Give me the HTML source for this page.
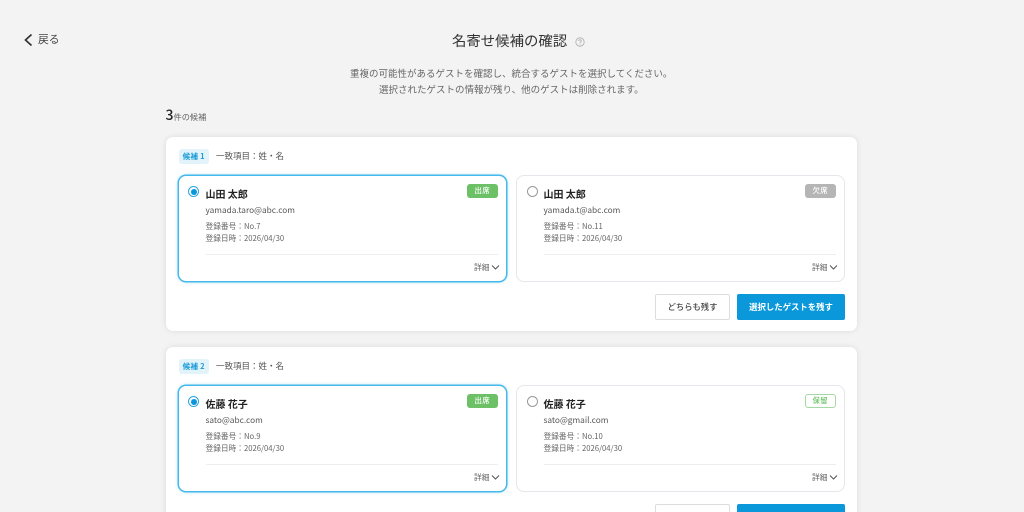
<!DOCTYPE html>
<html lang="ja"><head><meta charset="utf-8"><title>名寄せ候補の確認</title>
<style>
*{box-sizing:border-box;margin:0;padding:0}
html,body{width:1024px;height:512px;overflow:hidden;background:#f3f3f3}
body{position:relative;font-family:"Noto Sans CJK JP","Liberation Sans",sans-serif;color:#333}
.a{position:absolute;white-space:nowrap;line-height:1}
.card{position:absolute;left:166px;width:691px;height:194px;background:#fff;border-radius:7px;box-shadow:0 0 6px rgba(0,0,0,.1);overflow:visible}
.tag{position:absolute;left:13px;top:12px;width:29.500px;height:15px;background:#e2f3fa;border-radius:3px;color:#1b9bd7;font-size:7.600px;font-weight:700;line-height:15px;text-align:center;letter-spacing:.2px}
.match{left:50px;top:15px;font-size:8.500px;color:#555}
.g{position:absolute;top:38px;width:329px;height:107px;background:#fff;border-radius:8px;border:1px solid #e6e6ec}
.g.s{border:1px solid #45b8ec;box-shadow:0 0 0 .5px #45b8ec,0 0 3px rgba(69,184,236,.5)}
.g.l{left:12px}.g.r{left:350px}
.radio{position:absolute;left:9.500px;top:10px;width:11px;height:11px;border-radius:50%;border:1px solid #999;background:#fff}
.s .radio{border:1px solid #2aa5e0;left:9px}
.s .radio:after{content:"";position:absolute;left:1.500px;top:1.500px;width:6px;height:6px;border-radius:50%;background:#0a95dc}
.name{left:26.500px;top:13px;font-size:10px;font-weight:700;color:#222}
.mail{left:26.500px;top:29.500px;font-size:8.300px;color:#555}
.i1{left:26.500px;top:46.500px;font-size:7.700px;color:#666}
.i2{left:26.500px;top:59px;font-size:7.700px;color:#666}
.hr{position:absolute;left:26.500px;top:78px;width:292px;height:1px;background:#eee}
.det{left:295px;top:87.500px;font-size:7.800px;color:#666}
.chev{position:absolute;left:312px;top:88px}
.b{position:absolute;left:288px;top:8px;width:30.500px;height:14px;border-radius:3px;font-size:7.400px;font-weight:500;line-height:14px;text-align:center;color:#fff;background:#6cc066;letter-spacing:.3px}
.b.gray{background:#b5b5b5}
.b.out{background:#fff;border:1px solid #a5d8a2;color:#6cc066;line-height:12px}
.btn{position:absolute;top:157px;height:26px;border-radius:2px;font-size:8.300px;line-height:26px;text-align:center;font-weight:500}
.b1{left:489px;width:75px;background:#fff;border:1px solid #ddd;color:#444;line-height:24px}
.b2{left:571px;width:108px;background:#0a98db;color:#fff;font-weight:700;font-size:8.400px}
</style></head><body>
<svg class="a" style="left:23px;top:33px" width="11" height="14" viewBox="0 0 11 14"><path d="M8.500 1.500 L2.500 7 L8.500 12.500" fill="none" stroke="#333" stroke-width="1.700"/></svg>
<div class="a" style="left:38px;top:34px;font-size:10.800px;color:#444">戻る</div>
<div class="a" style="left:452px;top:33.500px;font-size:14.400px;color:#333">名寄せ候補の確認</div>
<svg class="a" style="left:575px;top:36.500px" width="10" height="10" viewBox="0 0 10 10"><circle cx="5" cy="5" r="4.200" fill="none" stroke="#aaa" stroke-width=".8"/><path d="M3.700 4C3.700 2.300 6.300 2.300 6.300 4C6.300 5 5 5 5 6" fill="none" stroke="#aaa" stroke-width=".8"/><circle cx="5" cy="7.300" r=".5" fill="#aaa"/></svg>
<div class="a" style="left:350px;top:68.500px;font-size:9.500px;color:#666">重複の可能性があるゲストを確認し、統合するゲストを選択してください。</div>
<div class="a" style="left:379px;top:84.500px;font-size:9.500px;color:#666">選択されたゲストの情報が残り、他のゲストは削除されます。</div>
<div class="a" style="left:165.500px;top:108px;font-size:14px;color:#222;font-weight:500">3</div>
<div class="a" style="left:173.500px;top:113px;font-size:8.200px;color:#666">件の候補</div>

<div class="card" style="top:137px">
<div class="tag">候補 1</div><div class="a match">一致項目：姓・名</div>
<div class="g s l"><div class="radio"></div><div class="a name">山田 太郎</div><div class="a mail">yamada.taro@abc.com</div><div class="a i1">登録番号：No.7</div><div class="a i2">登録日時：2026/04/30</div><div class="hr"></div><div class="a det">詳細</div><svg class="chev" width="9" height="7" viewBox="0 0 9 7"><path d="M1 1.500 L4.500 5 L8 1.500" fill="none" stroke="#555" stroke-width="1"/></svg><div class="b">出席</div></div>
<div class="g r"><div class="radio"></div><div class="a name">山田 太郎</div><div class="a mail">yamada.t@abc.com</div><div class="a i1">登録番号：No.11</div><div class="a i2">登録日時：2026/04/30</div><div class="hr"></div><div class="a det">詳細</div><svg class="chev" width="9" height="7" viewBox="0 0 9 7"><path d="M1 1.500 L4.500 5 L8 1.500" fill="none" stroke="#555" stroke-width="1"/></svg><div class="b gray">欠席</div></div>
<div class="btn b1">どちらも残す</div><div class="btn b2">選択したゲストを残す</div>
</div>

<div class="card" style="top:347px">
<div class="tag">候補 2</div><div class="a match">一致項目：姓・名</div>
<div class="g s l"><div class="radio"></div><div class="a name">佐藤 花子</div><div class="a mail">sato@abc.com</div><div class="a i1">登録番号：No.9</div><div class="a i2">登録日時：2026/04/30</div><div class="hr"></div><div class="a det">詳細</div><svg class="chev" width="9" height="7" viewBox="0 0 9 7"><path d="M1 1.500 L4.500 5 L8 1.500" fill="none" stroke="#555" stroke-width="1"/></svg><div class="b">出席</div></div>
<div class="g r"><div class="radio"></div><div class="a name">佐藤 花子</div><div class="a mail">sato@gmail.com</div><div class="a i1">登録番号：No.10</div><div class="a i2">登録日時：2026/04/30</div><div class="hr"></div><div class="a det">詳細</div><svg class="chev" width="9" height="7" viewBox="0 0 9 7"><path d="M1 1.500 L4.500 5 L8 1.500" fill="none" stroke="#555" stroke-width="1"/></svg><div class="b out">保留</div></div>
<div class="btn b1">どちらも残す</div><div class="btn b2">選択したゲストを残す</div>
</div>
</body></html>
